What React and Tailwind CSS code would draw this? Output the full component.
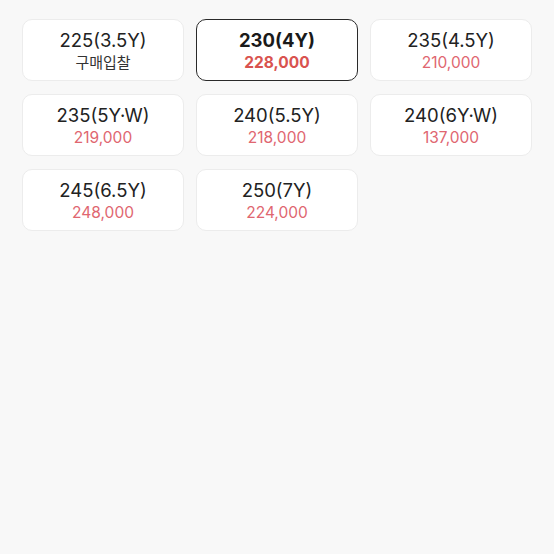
const sizes = [
  { size: '225(3.5Y)', price: null, sub: '구매입찰' },
  { size: '230(4Y)', price: '228,000', selected: true },
  { size: '235(4.5Y)', price: '210,000' },
  { size: '235(5Y·W)', price: '219,000' },
  { size: '240(5.5Y)', price: '218,000' },
  { size: '240(6Y·W)', price: '137,000' },
  { size: '245(6.5Y)', price: '248,000' },
  { size: '250(7Y)', price: '224,000' },
]

export default function App() {
  return (
    <div
      className="w-[554px] h-[554px] bg-[#f8f8f8] px-[22px] pt-[19px]"
      style={{ fontFamily: 'Inter, "Noto Sans CJK KR", sans-serif' }}
    >
      <div className="grid grid-cols-3 gap-x-[12px] gap-y-[13px]">
        {sizes.map((s) => (
          <button
            key={s.size}
            className={
              s.selected
                ? 'h-[62px] pt-[2px] rounded-[10px] bg-white border border-[#2a2a2a] flex flex-col items-center justify-center'
                : 'h-[62px] pt-[2px] rounded-[10px] bg-white border border-[#ececec] flex flex-col items-center justify-center'
            }
          >
            <span
              className={
                s.selected
                  ? 'text-[18.5px] leading-[23px] font-bold text-[#1a1a1a]'
                  : 'text-[18.5px] leading-[23px] text-[#222]'
              }
            >
              {s.size}
            </span>
            {s.sub ? (
              <span className="text-[15px] leading-[21px] text-[#333]">{s.sub}</span>
            ) : (
              <span
                className={
                  s.selected
                    ? 'text-[15.5px] leading-[21px] font-bold text-[#d9534f]'
                    : 'text-[15.5px] leading-[21px] text-[#e06670]'
                }
              >
                {s.price}
              </span>
            )}
          </button>
        ))}
      </div>
    </div>
  )
}
